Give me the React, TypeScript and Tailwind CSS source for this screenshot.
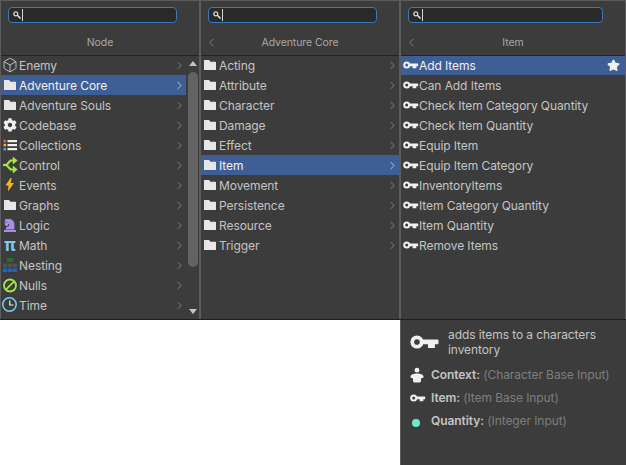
import { ChevronRight, ChevronLeft, Box, Star } from 'lucide-react'
import { FaCog, FaChessKnight } from 'react-icons/fa'
import type { ReactNode } from 'react'

function Folder() {
  return (
    <svg width="16" height="16" viewBox="0 0 16 16" className="shrink-0">
      <path d="M1.500 3H6l1.500 1.700h5a.5.5 0 0 1 .5.5v7.300a.5.5 0 0 1-.5.5h-11a.5.5 0 0 1-.5-.5v-9A.5.5 0 0 1 1.500 3z" fill="#e6e6e6" />
    </svg>
  )
}

function Key({ size = 16 }: { size?: number }) {
  return (
    <svg width={size} height={size} viewBox="0 0 16 16" className="shrink-0">
      <circle cx="3.700" cy="8" r="2.500" fill="none" stroke="#f0f0f0" strokeWidth="2" />
      <path d="M6.500 6.600h8.300a.4.4 0 0 1 .4.4v1.800a.4.4 0 0 1-.4.400h-1.500v2h-3.700v-2H6.500z" fill="#f0f0f0" />
    </svg>
  )
}

function Collections() {
  return (
    <svg width="16" height="16" viewBox="0 0 16 16" className="shrink-0">
      <rect x="0.500" y="2.700" width="2.600" height="2.600" fill="#e0623a" />
      <rect x="0.500" y="6.800" width="2.600" height="2.600" fill="#e8b32e" />
      <rect x="0.500" y="10.900" width="2.600" height="2.600" fill="#4aa3df" />
      <rect x="4.500" y="3" width="9.500" height="2.200" fill="#f0f0f0" />
      <rect x="4.500" y="7" width="9.500" height="2.200" fill="#f0f0f0" />
      <rect x="4.500" y="11" width="9.500" height="2.200" fill="#f0f0f0" />
    </svg>
  )
}

function Control() {
  return (
    <svg width="16" height="16" viewBox="0 0 16 16" className="shrink-0" fill="none" stroke="#a4e34a" strokeWidth="2.200">
      <path d="M11 3.500H7.500L3.500 8l4 4.500H11" />
      <path d="M0 8h3.500" />
      <path d="M10.500 1l3 2.500-3 2.500zM10.500 10l3 2.500-3 2.500z" strokeWidth="1.500" fill="#a4e34a" />
    </svg>
  )
}

function Bolt() {
  return (
    <svg width="16" height="16" viewBox="0 0 16 16" className="shrink-0">
      <path d="M7.500 1L2.500 8.500h3L5 14.500 11 6H7.700l1-5z" fill="#f5b428" />
    </svg>
  )
}

function Knight() {
  return (
    <div className="flex w-4 shrink-0 flex-col items-center pr-[2px]">
      <FaChessKnight size={14} color="#a98be8" className="-mb-[2px]" />
      <div className="h-[2px] w-3 bg-[#a98be8]" />
    </div>
  )
}

function Nesting() {
  return (
    <svg width="16" height="16" viewBox="0 0 16 16" className="shrink-0">
      <rect x="3.700" y="1" width="6.600" height="4" fill="#2a6b2e" />
      <rect x="0" y="6.500" width="4.300" height="4" fill="#505050" />
      <rect x="4.800" y="6.500" width="4.300" height="4" fill="#505050" />
      <rect x="9.600" y="6.500" width="4.300" height="4" fill="#505050" />
      <rect x="0" y="11.500" width="4.300" height="3.500" fill="#1668c0" />
      <rect x="4.800" y="11.500" width="4.300" height="3.500" fill="#1668c0" />
      <rect x="9.600" y="11.500" width="4.300" height="3.500" fill="#1668c0" />
    </svg>
  )
}

function Nulls() {
  return (
    <svg width="16" height="16" viewBox="0 0 16 16" className="shrink-0" fill="none" stroke="#a4e34a" strokeWidth="1.800">
      <circle cx="7" cy="8.500" r="6" />
      <path d="M11.200 4.300l-8.400 8.400" />
    </svg>
  )
}

function Clock() {
  return (
    <svg width="16" height="16" viewBox="0 0 16 16" className="shrink-0 overflow-visible" fill="none">
      <circle cx="6.500" cy="7.500" r="6.700" stroke="#7cc8f0" strokeWidth="1.600" />
      <path d="M6.800 3.500v4.500h3.700" stroke="#f0f0f0" strokeWidth="1.200" />
    </svg>
  )
}

function Person() {
  return (
    <svg width="16" height="16" viewBox="0 0 16 16" className="shrink-0">
      <circle cx="7" cy="3.200" r="2.400" fill="#f0f0f0" />
      <path d="M7 6.500c-3 0-6.500 1-6.500 3.200 0 1.100 1.300 1.600 2.500 1.600v2.500c0 1 .7 1.700 1.500 1.700h5c.8 0 1.500-.7 1.500-1.700v-2.500c1.200 0 2.500-.5 2.500-1.600C13.500 7.500 10 6.500 7 6.500z" fill="#f0f0f0" />
    </svg>
  )
}

function Magnifier() {
  return (
    <svg width="8" height="8" viewBox="0 0 8 8" className="shrink-0" fill="none" stroke="#d8d8d8">
      <circle cx="2.800" cy="2.800" r="2" strokeWidth="1.200" />
      <path d="M4.300 4.300l3.200 3.200" strokeWidth="1.600" />
    </svg>
  )
}

type Row = { label: string; icon: ReactNode; active?: boolean }

const nodes: Row[] = [
  { label: 'Enemy', icon: <Box size={16} strokeWidth={1.2} color="#dcdcdc" className="shrink-0 -translate-x-px" /> },
  { label: 'Adventure Core', icon: <Folder />, active: true },
  { label: 'Adventure Souls', icon: <Folder /> },
  { label: 'Codebase', icon: <span className="flex w-4 shrink-0 justify-center pr-[2px]"><FaCog size={14} color="#f0f0f0" /></span> },
  { label: 'Collections', icon: <Collections /> },
  { label: 'Control', icon: <Control /> },
  { label: 'Events', icon: <Bolt /> },
  { label: 'Graphs', icon: <Folder /> },
  { label: 'Logic', icon: <Knight /> },
  { label: 'Math', icon: <span className="w-4 shrink-0 pr-[2px] text-center text-[18px] leading-4 font-bold text-[#7cc8f0]">π</span> },
  { label: 'Nesting', icon: <Nesting /> },
  { label: 'Nulls', icon: <Nulls /> },
  { label: 'Time', icon: <Clock /> },
]

const core = ['Acting', 'Attribute', 'Character', 'Damage', 'Effect', 'Item', 'Movement', 'Persistence', 'Resource', 'Trigger']

const items = [
  'Add Items',
  'Can Add Items',
  'Check Item Category Quantity',
  'Check Item Quantity',
  'Equip Item',
  'Equip Item Category',
  'InventoryItems',
  'Item Category Quantity',
  'Item Quantity',
  'Remove Items',
]

function SearchBox({ width }: { width: string }) {
  return (
    <div className="flex h-[22px] items-end pl-[7px]">
      <div className={`${width} flex h-4 items-center rounded-[4px] border border-[#3a79bb] bg-[#2a2a2a] pl-1`}>
        <Magnifier />
        <div className="ml-[1px] h-3 w-px bg-[#d8d8d8]" />
      </div>
    </div>
  )
}

function Header({ title, back }: { title: string; back?: boolean }) {
  return (
    <div className="relative flex h-[33px] items-center justify-center border-b border-[#232323] pt-2 text-[10.5px] text-[#a8a8a8]">
      {back && <ChevronLeft size={13} strokeWidth={1.6} color="#8a8a8a" className="absolute top-[13px] left-[4px]" />}
      {title}
    </div>
  )
}

function ListRow({ row, arrow = true, star }: { row: Row; arrow?: boolean; star?: boolean }) {
  return (
    <div className={`flex h-5 items-center pl-[2px] ${row.active ? 'bg-[#3e5f96] text-[#f0f0f0]' : 'text-[#c4c4c4]'}`}>
      {row.icon}
      <span className="flex-1 pt-[2px] whitespace-nowrap">{row.label}</span>
      {arrow && <ChevronRight size={13} strokeWidth={1.6} color={row.active ? '#c8d0e0' : '#8a8a8a'} />}
      {star && <Star size={13} fill="#f0f0f0" stroke="#f0f0f0" className="mr-[5px]" />}
    </div>
  )
}

function Panel({ width, children }: { width: string; children: ReactNode }) {
  return <div className={`${width} flex shrink-0 flex-col border-r border-l border-[#5c5c5c] bg-[#3c3c3c]`}>{children}</div>
}

export default function App() {
  return (
    <div className="h-[465px] w-[626px] overflow-hidden bg-white font-['Inter','Noto_Sans',sans-serif] text-[12px] tracking-[-0.08px]">
      <div className="flex h-[320px] border-t border-b border-t-[#5c5c5c] border-b-[#1e1e1e]">
        {/* Node */}
        <Panel width="w-[200px]">
          <SearchBox width="w-[169px]" />
          <Header title="Node" />
          <div className="-mt-px flex flex-1">
            <div className="flex-1">
              {nodes.map((row) => (
                <ListRow key={row.label} row={row} />
              ))}
            </div>
            <div className="mt-px flex w-[13px] flex-col items-center">
              <div className="mt-[5px] h-0 w-0 border-x-[4px] border-b-[5px] border-x-transparent border-b-[#c4c4c4]" />
              <div className="mt-[6px] h-[195px] w-[10px] rounded-[5px] bg-[#636363]" />
              <div className="mt-[42px] h-0 w-0 border-x-[4px] border-t-[5px] border-x-transparent border-t-[#c4c4c4]" />
            </div>
          </div>
        </Panel>

        {/* Adventure Core */}
        <Panel width="w-[200px]">
          <SearchBox width="w-[169px]" />
          <Header title="Adventure Core" back />
          <div className="-mt-px">
            {core.map((label) => (
              <ListRow key={label} row={{ label, icon: <Folder />, active: label === 'Item' }} />
            ))}
          </div>
        </Panel>

        {/* Item */}
        <Panel width="w-[226px]">
          <SearchBox width="w-[195px]" />
          <Header title="Item" back />
          <div className="-mt-px">
            {items.map((label, i) => (
              <ListRow key={label} row={{ label, icon: <Key />, active: i === 0 }} arrow={false} star={i === 0} />
            ))}
          </div>
        </Panel>
      </div>

      {/* Description */}
      <div className="ml-[400px] h-[145px] w-[226px] border-l border-[#5c5c5c] bg-[#3c3c3c] text-[#c4c4c4]">
        <div className="flex pt-[7px] pl-[9px]">
          <Key size={30} />
          <p className="ml-[8px] w-[160px] leading-[15px]">adds items to a characters inventory</p>
        </div>
        <div className="mt-[6px] flex h-[23px] items-center pl-[9px]">
          <Person />
          <p className="ml-[5px] whitespace-nowrap">
            <b className="font-semibold">Context:</b> <span className="text-[#7e7e7e]">(Character Base Input)</span>
          </p>
        </div>
        <div className="flex h-[23px] items-center pl-[9px]">
          <Key />
          <p className="ml-[5px] whitespace-nowrap">
            <b className="font-semibold">Item:</b> <span className="text-[#7e7e7e]">(Item Base Input)</span>
          </p>
        </div>
        <div className="flex h-[23px] items-center pl-[9px]">
          <div className="w-4 shrink-0 pt-1 pl-[2px]">
            <div className="h-2 w-2 rounded-full bg-[#6fe8d0]" />
          </div>
          <p className="ml-[5px] whitespace-nowrap">
            <b className="font-semibold">Quantity:</b> <span className="text-[#7e7e7e]">(Integer Input)</span>
          </p>
        </div>
      </div>
    </div>
  )
}
